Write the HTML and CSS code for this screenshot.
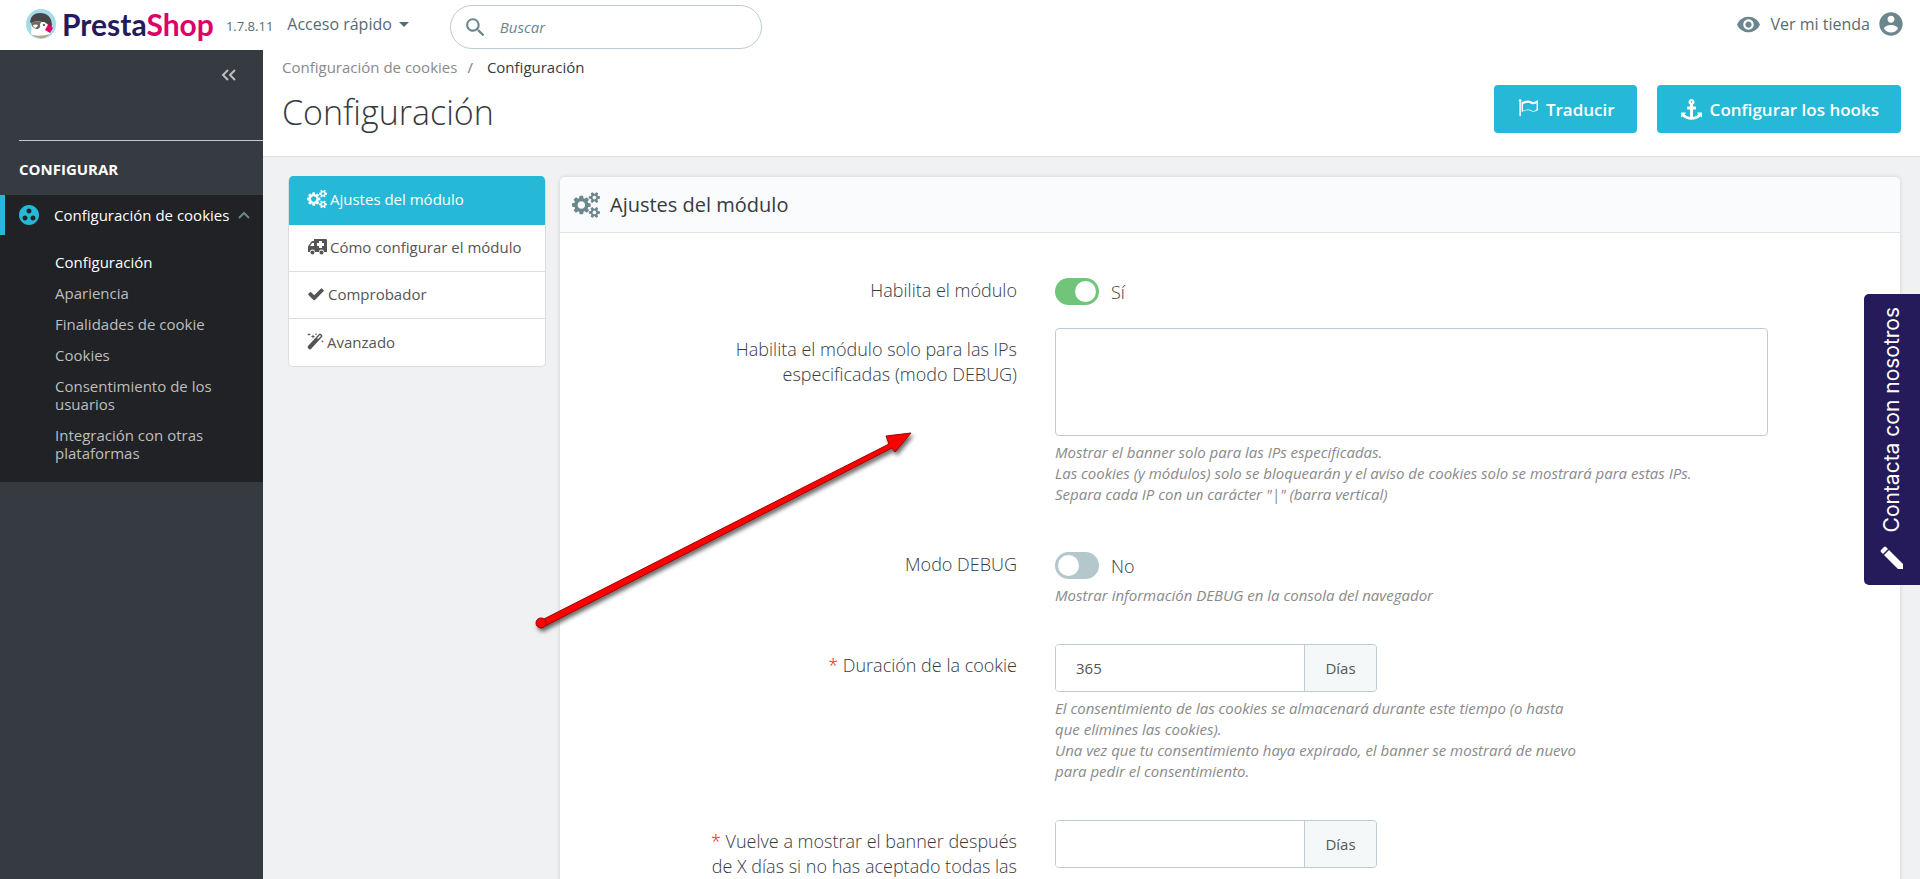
FILE: index.html
```html
<!DOCTYPE html>
<html lang="es">
<head>
    <title>Configuración</title>
    <meta charset="utf-8" />
    <link rel="stylesheet" href="styles.css">
</head>
<body>

    <!-- shared icons -->
    <svg class="sprite" aria-hidden="true">
        <symbol id="cogs" viewBox="0 0 1920 1792">
            <path d="M896 896q0-106-75-181t-181-75-181 75-75 181 75 181 181 75 181-75 75-181zm768 512q0-52-38-90t-90-38-90 38-38 90q0 53 37.5 90.5t90.5 37.5 90.5-37.5 37.5-90.5zm0-1024q0-52-38-90t-90-38-90 38-38 90q0 53 37.5 90.5t90.5 37.5 90.5-37.5 37.5-90.5zm-384 421v185q0 10-7 19.5t-16 10.5l-155 24q-11 35-32 76 34 48 90 115 7 11 7 20 0 12-7 19-23 30-82.5 89.5t-78.5 59.5q-11 0-21-7l-115-90q-37 19-77 31-11 108-23 155-7 24-30 24h-186q-11 0-20-7.5t-10-17.5l-23-153q-34-10-75-31l-118 89q-7 7-20 7-11 0-21-8-144-133-144-160 0-9 7-19 10-14 41-53t47-61q-23-44-35-82l-152-24q-10-1-17-9.5t-7-19.5v-185q0-10 7-19.5t16-10.5l155-24q11-35 32-76-34-48-90-115-7-11-7-20 0-12 7-20 22-30 82-89t79-59q11 0 21 7l115 90q34-18 77-32 11-108 23-154 7-24 30-24h186q11 0 20 7.5t10 17.5l23 153q34 10 75 31l118-89q8-7 20-7 11 0 21 8 144 133 144 160 0 8-7 19-12 16-42 54t-45 60q23 48 34 82l152 23q10 2 17 10.5t7 19.5zm640 533v140q0 16-149 31-12 27-30 52 51 113 51 138 0 4-4 7-122 71-124 71-8 0-46-47t-52-68q-20 2-30 2t-30-2q-14 21-52 68t-46 47q-2 0-124-71-4-3-4-7 0-25 51-138-18-25-30-52-149-15-149-31v-140q0-16 149-31 13-29 30-52-51-113-51-138 0-4 4-7 4-2 35-20t59-34 30-16q8 0 46 46.5t52 67.5q20-2 30-2t30 2q51-71 92-112l6-2q4 0 124 70 4 3 4 7 0 25-51 138 17 23 30 52 149 15 149 31zm0-1024v140q0 16-149 31-12 27-30 52 51 113 51 138 0 4-4 7-122 71-124 71-8 0-46-47t-52-68q-20 2-30 2t-30-2q-14 21-52 68t-46 47q-2 0-124-71-4-3-4-7 0-25 51-138-18-25-30-52-149-15-149-31v-140q0-16 149-31 13-29 30-52-51-113-51-138 0-4 4-7 4-2 35-20t59-34 30-16q8 0 46 46.5t52 67.5q20-2 30-2t30 2q51-71 92-112l6-2q4 0 124 70 4 3 4 7 0 25-51 138 17 23 30 52 149 15 149 31z"/>
        </symbol>
    </svg>

    <header class="topbar">
        <a href="#" class="logo">
            <svg viewBox="0 0 32 32" width="32" height="32" aria-hidden="true">
                <circle cx="16" cy="16" r="15" fill="#a4dbe8"/>
                <path d="M6 14q1 7 0 12 9 6 19 0l1-10q-10-8-20-2z" fill="#fff"/>
                <path d="M5 14Q6 5 15 5q11 0 12 12l-1 5q-3-8-9-8-6-2-11 1z" fill="#474747"/>
                <path d="M6 15q5-3 10-1 1 4-3 7-6 0-7-6z" fill="#6d6866"/>
                <path d="M8 17q3-1 5 0-1 3-3 3-2-1-2-3z" fill="#fff"/>
                <circle cx="18" cy="17" r="3" fill="#fff"/>
                <circle cx="19" cy="17" r="1" fill="#333"/>
                <path d="M24 15l1 3 3 2-3 5-5-3z" fill="#df0067"/>
                <path d="M7 27q9 2 18-1-8 8-18 1z" fill="#b9a488"/>
            </svg>
            <span class="logo_text">Presta<span>Shop</span></span>
        </a>
        <span class="version">1.7.8.11</span>
        <button type="button" class="quick">Acceso rápido</button>
        <form class="search">
            <svg viewBox="0 0 24 24" width="25" height="25" aria-hidden="true"><path d="M15.5 14h-.79l-.28-.27C15.41 12.59 16 11.11 16 9.5 16 5.91 13.09 3 9.5 3S3 5.91 3 9.5 5.91 16 9.5 16c1.61 0 3.09-.59 4.23-1.57l.27.28v.79l5 4.99L20.49 19l-4.99-5zm-6 0C7.01 14 5 11.99 5 9.5S7.01 5 9.5 5 14 7.01 14 9.5 11.99 14 9.5 14z"/></svg>
            <input type="text" placeholder="Buscar" aria-label="Buscar">
        </form>
        <a href="#" class="shop_link">
            <svg viewBox="0 0 24 24" width="25" height="25" aria-hidden="true"><path d="M12 4.5C7 4.5 2.73 7.61 1 12c1.73 4.39 6 7.5 11 7.5s9.27-3.11 11-7.5c-1.73-4.39-6-7.5-11-7.5zM12 17c-2.76 0-5-2.24-5-5s2.24-5 5-5 5 2.24 5 5-2.24 5-5 5zm0-8c-1.66 0-3 1.34-3 3s1.34 3 3 3 3-1.34 3-3-1.34-3-3-3z"/></svg>
            <span>Ver mi tienda</span>
        </a>
        <button type="button" class="account" aria-label="Cuenta">
            <svg viewBox="0 0 24 24" width="28" height="28" aria-hidden="true"><path d="M12 2C6.48 2 2 6.48 2 12s4.48 10 10 10 10-4.48 10-10S17.52 2 12 2zm0 3c1.66 0 3 1.34 3 3s-1.34 3-3 3-3-1.34-3-3 1.34-3 3-3zm0 14.2c-2.5 0-4.71-1.28-6-3.22.03-1.99 4-3.08 6-3.08 1.99 0 5.97 1.09 6 3.08-1.29 1.94-3.5 3.22-6 3.22z"/></svg>
        </button>
    </header>

    <div class="layout">

        <nav class="sidebar">
            <div class="collapse">
                <button type="button" aria-label="Contraer menú">
                    <svg viewBox="0 0 16 14" width="16" height="14" aria-hidden="true"><path d="M7 2L2 7l5 5M14 2L9 7l5 5"/></svg>
                </button>
            </div>
            <div class="section_title">CONFIGURAR</div>
            <div class="menu">
                <a href="#" class="menu_head">
                    <svg class="group_icon" viewBox="2 2 20 20" width="20" height="20" aria-hidden="true"><path d="M12 2C6.48 2 2 6.48 2 12s4.48 10 10 10 10-4.48 10-10S17.52 2 12 2zM8 17.5c-1.38 0-2.5-1.12-2.5-2.5s1.12-2.5 2.5-2.5 2.5 1.12 2.5 2.5-1.12 2.5-2.5 2.5zM9.5 8c0-1.38 1.12-2.5 2.5-2.5s2.5 1.12 2.5 2.5-1.12 2.5-2.5 2.5S9.5 9.38 9.5 8zm6.5 9.5c-1.38 0-2.5-1.12-2.5-2.5s1.12-2.5 2.5-2.5 2.5 1.12 2.5 2.5-1.12 2.5-2.5 2.5z"/></svg>
                    <span>Configuración de cookies</span>
                    <svg class="chevron" viewBox="0 0 12 8" width="12" height="8" aria-hidden="true"><path d="M1 7l5-5 5 5"/></svg>
                </a>
                <ul>
                    <li><a href="#" class="current">Configuración</a></li>
                    <li><a href="#">Apariencia</a></li>
                    <li><a href="#">Finalidades de cookie</a></li>
                    <li><a href="#">Cookies</a></li>
                    <li><a href="#">Consentimiento de los usuarios</a></li>
                    <li><a href="#">Integración con otras plataformas</a></li>
                </ul>
            </div>
        </nav>

        <main>
            <div class="page_head">
                <div>
                    <div class="breadcrumb"><a href="#">Configuración de cookies</a><span>/</span><a href="#" class="here">Configuración</a></div>
                    <h1>Configuración</h1>
                </div>
                <div class="toolbar">
                    <button type="button" class="btn">
                        <svg viewBox="0 0 1792 1792" width="20" height="20" aria-hidden="true"><path d="M1664 970v-589q-169 91-306 91-82 0-145-32-100-49-184-76.5t-178-27.5q-173 0-403 127v580q245-113 433-113 55 0 103.5 7.5t98 26 77 31 82.5 39.5l28 14q44 22 101 22 120 0 293-92zm-1344-842q0 35-17.5 64t-46.5 46v1266q0 14-9 23t-23 9h-64q-14 0-23-9t-9-23v-1266q-29-17-46.5-46t-17.5-64q0-53 37.5-90.5t90.5-37.5 90.5 37.5 37.5 90.5zm1472 64v763q0 39-35 57-10 5-17 9-218 116-369 116-88 0-158-35l-28-14q-64-33-99-48t-91-29-114-14q-102 0-235.5 44t-228.5 102q-15 9-33 9-16 0-32-8-32-19-32-56v-742q0-35 31-55 35-21 78.5-42.5t114-52 152.5-49.5 155-19q112 0 209 31t209 86q38 19 89 19 122 0 310-112 22-12 31-17 31-16 62 2 31 20 31 55z"/></svg>
                        Traducir
                    </button>
                    <button type="button" class="btn">
                        <svg viewBox="0 0 1792 1792" width="21" height="21" aria-hidden="true"><path d="M960 256q0-26-19-45t-45-19-45 19-19 45 19 45 45 19 45-19 19-45zm832 928v352q0 22-20 30-8 2-12 2-12 0-23-9l-93-93q-119 143-318.5 226.5t-429.5 83.5-429.5-83.5-318.5-226.5l-93 93q-9 9-23 9-4 0-12-2-20-8-20-30v-352q0-14 9-23t23-9h352q22 0 30 20 8 19-7 35l-100 100q67 91 189.5 153.5t271.5 82.5v-647h-192q-26 0-45-19t-19-45v-128q0-26 19-45t45-19h192v-163q-58-34-93-92.5t-35-128.5q0-106 75-181t181-75 181 75 75 181q0 70-35 128.5t-93 92.5v163h192q26 0 45 19t19 45v128q0 26-19 45t-45 19h-192v647q149-20 271.5-82.5t189.5-153.5l-100-100q-15-16-7-35 8-20 30-20h352q14 0 23 9t9 23z"/></svg>
                        Configurar los hooks
                    </button>
                </div>
            </div>

            <div class="content">
                <nav class="tabs">
                    <a href="#" class="active">
                        <svg width="20" height="20" aria-hidden="true"><use href="#cogs"/></svg>
                        Ajustes del módulo
                    </a>
                    <a href="#">
                        <svg viewBox="0 0 20 18" width="20" height="18" aria-hidden="true">
                            <path fill-rule="evenodd" d="M7 1h12q1 0 1 1v12h-3a2.5 2.5 0 1 0-5 0H8a2.5 2.5 0 1 0-5 0H1V9q0-1 1-2l2-3q1-1 2-1h1zM3 8h4V5H5zM12 3v2h-2v3h2v2h3V8h2V5h-2V3z"/>
                            <circle cx="5.500" cy="14.500" r="2"/><circle cx="14.500" cy="14.500" r="2"/>
                        </svg>
                        Cómo configurar el módulo
                    </a>
                    <a href="#">
                        <svg viewBox="0 0 1792 1792" width="18" height="18" aria-hidden="true"><path d="M1671 566q0 40-28 68l-724 724-136 136q-28 28-68 28t-68-28l-136-136-362-362q-28-28-28-68t28-68l136-136q28-28 68-28t68 28l294 295 656-657q28-28 68-28t68 28l136 136q28 28 28 68z"/></svg>
                        Comprobador
                    </a>
                    <a href="#">
                        <svg viewBox="0 0 17 17" width="17" height="17" aria-hidden="true">
                            <path fill-rule="evenodd" d="M12 1q1-1 2 0l1 1q1 1 0 2L4 16q-1 1-2 0l-1-1q-1-1 0-2zM10 5l1 1 3-3-1-1z"/>
                            <path d="M2 0l.5 1L4 1.500l-1.500.5L2 3l-.5-1L0 1.500 1.500 1zM6 1l.6 1.900L8.500 3.500l-1.900.6L6 6l-.6-1.900-1.900-.6 1.900-.6zM9 0l.4.800.800.400-.800.400L9 2.400l-.4-.800-.800-.400.800-.400zM15.500 7l.4 1 1 .4-1 .4-.4 1-.4-1-1-.4 1-.4z"/>
                        </svg>
                        Avanzado
                    </a>
                </nav>

                <section class="panel">
                    <h2>
                        <svg width="28" height="28" aria-hidden="true"><use href="#cogs"/></svg>
                        Ajustes del módulo
                    </h2>
                    <form class="panel_body">
                        <div class="row row_tight">
                            <label for="enable">Habilita el módulo</label>
                            <div class="field">
                                <div class="switch"><input type="checkbox" id="enable" checked><span>Sí</span></div>
                            </div>
                        </div>
                        <div class="row">
                            <label for="ips">Habilita el módulo solo para las IPs especificadas (modo DEBUG)</label>
                            <div class="field">
                                <textarea id="ips"></textarea>
                                <p class="help">Mostrar el banner solo para las IPs especificadas.<br>Las cookies (y módulos) solo se bloquearán y el aviso de cookies solo se mostrará para estas IPs.<br>Separa cada IP con un carácter "|" (barra vertical)</p>
                            </div>
                        </div>
                        <div class="row">
                            <label for="debug">Modo DEBUG</label>
                            <div class="field">
                                <div class="switch"><input type="checkbox" id="debug"><span>No</span></div>
                                <p class="help">Mostrar información DEBUG en la consola del navegador</p>
                            </div>
                        </div>
                        <div class="row">
                            <label for="duration"><em>*</em> Duración de la cookie</label>
                            <div class="field">
                                <div class="group"><input type="text" id="duration" value="365"><span>Días</span></div>
                                <p class="help help_short">El consentimiento de las cookies se almacenará durante este tiempo (o hasta que elimines las cookies).<br>Una vez que tu consentimiento haya expirado, el banner se mostrará de nuevo para pedir el consentimiento.</p>
                            </div>
                        </div>
                        <div class="row">
                            <label for="again"><em>*</em> Vuelve a mostrar el banner después de X días si no has aceptado todas las</label>
                            <div class="field">
                                <div class="group"><input type="text" id="again"><span>Días</span></div>
                            </div>
                        </div>
                    </form>
                </section>
            </div>
        </main>
    </div>

    <button type="button" class="contact">
        <svg viewBox="0 0 24 24" width="24" height="24" aria-hidden="true"><path d="M1 4l3-3q1-1 2 0l2 2-5 5-2-2q-1-1 0-2zM4 9l5-5 14 14v5h-5z"/></svg>
        <span>Contacta con nosotros</span>
    </button>

    <svg class="arrow" viewBox="0 0 390 210" width="390" height="210" aria-hidden="true">
        <g fill="#f00" stroke="#a00000" stroke-width="1">
            <path d="M10 191L359 14l-3-8 25-3-16 19-3-4L13 197z"/>
            <circle cx="11" cy="193" r="5"/>
        </g>
    </svg>

</body>
</html>
```
FILE: styles.css
```css
* {
    box-sizing: border-box;
}

body {
    margin: 0;
    height: 100vh;
    overflow: hidden;
    display: flex;
    flex-direction: column;
    background: #eff1f2;
    color: #363a41;
    font-family: "Open Sans", "Liberation Sans", sans-serif;
    font-size: 15px;
}

a {
    color: inherit;
    text-decoration: none;
}

button,
input,
textarea {
    font: inherit;
    color: inherit;
}

button {
    border: 0;
    padding: 0;
    background: none;
    cursor: pointer;
}

svg {
    flex: none;
    fill: currentColor;
}

.sprite {
    display: none;
}

/* top bar */
.topbar {
    flex: none;
    display: flex;
    align-items: center;
    height: 50px;
    padding: 0 15px 2px 25px;
    background: #fff;
    color: #6c868e;
}

.logo {
    display: flex;
    align-items: center;
    gap: 5px;
}

.logo_text {
    color: #251b5b;
    font-family: Lato, sans-serif;
    font-size: 30px;
    font-weight: 700;
    line-height: 40px;
}

.logo_text span {
    color: #df0067;
}

.version {
    margin-left: 12px;
    padding-top: 4px;
    color: #576c72;
    font-size: 13px;
}

.quick {
    display: flex;
    align-items: center;
    gap: 7px;
    margin-left: 14px;
    color: #576c72;
    font-size: 16px;
}

.quick::after {
    content: "";
    border: 5px solid transparent;
    border-top-color: #576c72;
    border-bottom: 0;
}

.search {
    display: flex;
    align-items: center;
    gap: 10px;
    width: 312px;
    height: 44px;
    margin: 6px 0 0 41px;
    padding: 0 12px;
    border: 1px solid #bbcdd2;
    border-radius: 22px;
}

.search input {
    flex: 1;
    min-width: 0;
    border: 0;
    outline: 0;
    background: none;
}

.search input::placeholder {
    color: #6c868e;
    font-style: italic;
    opacity: 1;
}

.shop_link {
    display: flex;
    align-items: center;
    gap: 10px;
    margin-left: auto;
    font-size: 16px;
}

.shop_link span {
    color: #576c72;
}

.account {
    display: flex;
    margin-left: 7px;
}

.layout {
    flex: 1;
    min-height: 0;
    display: flex;
}

/* left menu */
.sidebar {
    flex: none;
    width: 263px;
    background: #363a41;
    color: #fff;
}

.collapse {
    height: 91px;
    margin-left: 19px;
    padding: 16px 26px 0 0;
    border-bottom: 1px solid #bbcdd2;
    text-align: right;
}

.collapse svg {
    fill: none;
    stroke: #bebebe;
    stroke-width: 2;
}

.section_title {
    padding: 17px 19px 15px;
    font-weight: 700;
    line-height: 22px;
}

.menu {
    background: #202226;
    padding-bottom: 13px;
}

.menu_head {
    display: flex;
    align-items: center;
    height: 40px;
    padding-left: 14px;
    border-left: 5px solid #25b9d7;
}

.group_icon {
    margin-right: 15px;
    color: #25b9d7;
}

.chevron {
    margin-left: 9px;
    fill: none;
    stroke: #6c868e;
    stroke-width: 2;
}

.menu ul {
    margin: 0;
    padding: 12px 30px 0 55px;
    list-style: none;
}

.menu li {
    padding: 6px 0 7px;
    line-height: 18px;
}

.menu li a {
    color: #bebebe;
}

.menu li .current {
    color: #fff;
}

/* page header */
main {
    flex: 1;
    min-width: 0;
}

.page_head {
    display: flex;
    justify-content: space-between;
    height: 107px;
    padding: 5px 19px 0;
    background: #fff;
    border-bottom: 1px solid #dddddd;
}

.breadcrumb {
    line-height: 24px;
    color: #8a8a8a;
}

.breadcrumb span {
    margin: 0 14px 0 10px;
    color: #6c868e;
}

.breadcrumb .here {
    color: #363a41;
}

h1 {
    margin: 10px 0 0;
    font-size: 34px;
    font-weight: 300;
    line-height: 46px;
}

.toolbar {
    display: flex;
    gap: 20px;
    padding-top: 30px;
}

.btn {
    display: flex;
    align-items: center;
    gap: 8px;
    height: 48px;
    padding: 0 22px 0 24px;
    border-radius: 4px;
    background: #25b9d7;
    color: #fff;
    font-size: 17px;
    font-weight: 600;
}

.content {
    display: flex;
    align-items: flex-start;
    gap: 14px;
    padding: 19px 20px 0 25px;
}

/* module tabs */
.tabs {
    flex: none;
    width: 258px;
    border: 1px solid #dddddd;
    border-top: 0;
    border-radius: 5px;
    background: #fff;
    color: #555;
    overflow: hidden;
}

.tabs a {
    display: flex;
    align-items: center;
    gap: 3px;
    height: 47px;
    padding: 0 0 2px 18px;
    border-bottom: 1px solid #dddddd;
}

.tabs a:last-child {
    border-bottom: 0;
}

.tabs .active {
    height: 49px;
    background: #25b9d7;
    border-color: #25b9d7;
    color: #fff;
}

/* settings panel */
.panel {
    flex: 1;
    margin-top: 1px;
    border-radius: 5px;
    background: #fff;
    box-shadow: 0 0 4px rgba(0, 0, 0, 0.15);
}

.panel h2 {
    display: flex;
    align-items: center;
    gap: 10px;
    height: 56px;
    margin: 0;
    padding: 0 12px;
    border-bottom: 1px solid #dbe6e9;
    border-radius: 5px 5px 0 0;
    background: #fafbfc;
    font-size: 20px;
    font-weight: 500;
}

.panel h2 svg {
    color: #6c868e;
}

.panel_body {
    padding: 36px 132px 36px 0;
}

.row {
    display: grid;
    grid-template-columns: 457px 1fr;
    gap: 38px;
    margin-bottom: 38px;
}

.row_tight {
    margin-bottom: 23px;
}

.row label {
    padding: 9px 0 0 132px;
    font-size: 18px;
    font-weight: 300;
    line-height: 25px;
    text-align: right;
}

.row em {
    color: #f00;
    font-style: normal;
}

textarea {
    display: block;
    width: 100%;
    height: 108px;
    padding: 8px 20px;
    border: 1px solid #bbcdd2;
    border-radius: 4px;
    resize: none;
}

.help {
    margin: 6px 0 0;
    color: #8a8a8a;
    font-size: 15px;
    font-style: italic;
    line-height: 21px;
}

.help_short {
    max-width: 528px;
}

.switch {
    display: flex;
    align-items: center;
    gap: 12px;
    height: 27px;
    margin-top: 9px;
    font-size: 18px;
    font-weight: 300;
}

.switch input {
    appearance: none;
    display: flex;
    width: 44px;
    height: 27px;
    margin: 0;
    padding: 3px;
    border-radius: 14px;
    background: #b3c7cd;
}

.switch input::before {
    content: "";
    width: 21px;
    border-radius: 50%;
    background: #fff;
}

.switch input:checked {
    justify-content: flex-end;
    background: #70c57a;
}

.group {
    display: flex;
    width: 322px;
    height: 48px;
    border: 1px solid #bbcdd2;
    border-radius: 4px;
    overflow: hidden;
}

.group input {
    flex: 1;
    min-width: 0;
    padding: 0 20px;
    border: 0;
    outline: 0;
}

.group span {
    width: 72px;
    border-left: 1px solid #bbcdd2;
    background: #f4f8f9;
    line-height: 46px;
    text-align: center;
}

.group input,
.group span {
    color: #555;
}

/* floating contact tab, reads bottom to top */
.contact {
    position: fixed;
    top: 294px;
    right: 0;
    display: flex;
    flex-direction: column-reverse;
    align-items: center;
    gap: 14px;
    width: 56px;
    padding: 13px 0 15px;
    border-radius: 5px 0 0 5px;
    background: #251b5b;
    color: #fff;
    font-family: Inter, sans-serif;
    font-size: 21px;
    line-height: 26px;
}

.contact span {
    writing-mode: vertical-rl;
    transform: rotate(180deg);
}

/* pointer drawn over the form */
.arrow {
    position: absolute;
    top: 430px;
    left: 530px;
    filter: drop-shadow(2px 3px 2px rgba(0, 0, 0, 0.6));
    pointer-events: none;
}
```
